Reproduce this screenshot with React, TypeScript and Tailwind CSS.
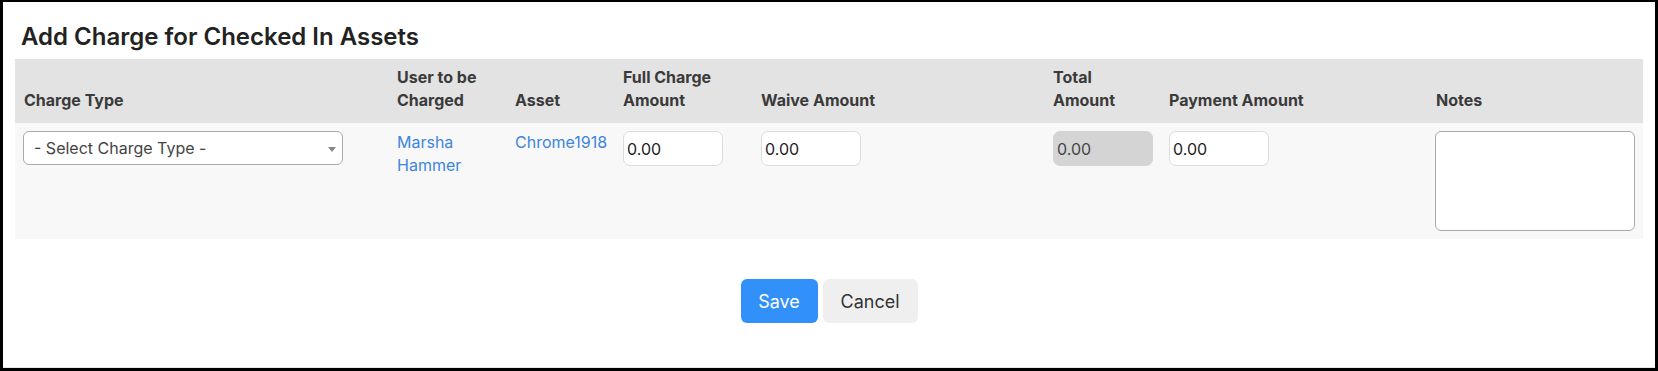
import React from 'react';

const columns = [
    { key: 'type', label: ['Charge Type'], width: 'w-[373px]' },
    { key: 'user', label: ['User to be', 'Charged'], width: 'w-[118px]' },
    { key: 'asset', label: ['Asset'], width: 'w-[108px]' },
    { key: 'full', label: ['Full Charge', 'Amount'], width: 'w-[138px]' },
    { key: 'waive', label: ['Waive Amount'], width: 'w-[292px]' },
    { key: 'total', label: ['Total', 'Amount'], width: 'w-[116px]' },
    { key: 'payment', label: ['Payment Amount'], width: 'w-[267px]' },
    { key: 'notes', label: ['Notes'], width: 'w-[216px]' },
];

function AmountInput({ value, disabled }: { value: string; disabled?: boolean }) {
    return (
        <input
            type="text"
            defaultValue={value}
            disabled={disabled}
            className={`block w-[100px] h-[35px] rounded-[7px] border pl-[3px] text-[16px] outline-none ${disabled
                ? 'bg-[#d4d4d4] border-[#d4d4d4] text-[#444]'
                : 'bg-white border-[#dcdcdc] text-[#222]'
                }`}
        />
    );
}

export default function App() {
    return (
        <div
            className="w-[1658px] h-[371px] bg-white border-black border-t-2 border-x-[3px] border-b-[3px]"
            style={{ fontFamily: 'Inter, "Noto Sans", sans-serif' }}
        >
            <div className="h-full flex flex-col px-3 border-b border-[#e6e6e6]">
                {/* Title */}
                <h2 className="mt-[20px] ml-[6px] text-[24px] leading-[29px] font-semibold text-[#222]">
                    Add Charge for Checked In Assets
                </h2>

                {/* Charges table */}
                <table className="mt-[8px] w-[1628px] table-fixed border-collapse">
                    <colgroup>
                        {columns.map((c) => (
                            <col key={c.key} className={c.width} />
                        ))}
                    </colgroup>
                    <thead>
                        <tr className="bg-[#e3e3e3]">
                            {columns.map((c) => (
                                <th
                                    key={c.key}
                                    className="px-[9px] pt-[7px] pb-[11px] align-bottom text-left text-[16px] leading-[23px] font-bold text-[#3a3a3a]"
                                >
                                    {c.label.map((line, i) => (
                                        <div key={i}>{line}</div>
                                    ))}
                                </th>
                            ))}
                        </tr>
                    </thead>
                    <tbody>
                        <tr className="bg-[#f8f8f8] align-top text-[16px] leading-[23px]">
                            <td className="px-[8px] py-2">
                                <div className="relative w-[320px] h-[34px] bg-white border border-[#aaa] rounded-[6px] flex items-center pl-[10px] text-[16px] text-[#444]">
                                    - Select Charge Type -
                                    <span className="absolute right-[6px] top-[15px] w-0 h-0 border-x-[4px] border-x-transparent border-t-[5px] border-t-[#888]" />
                                </div>
                            </td>
                            <td className="px-[9px] py-2 text-[#3d85de]">
                                <div>Marsha</div>
                                <div>Hammer</div>
                            </td>
                            <td className="px-[9px] py-2 text-[#3d85de]">Chrome1918</td>
                            <td className="px-[9px] py-2">
                                <AmountInput value="0.00" />
                            </td>
                            <td className="px-[9px] py-2">
                                <AmountInput value="0.00" />
                            </td>
                            <td className="px-[9px] py-2">
                                <AmountInput value="0.00" disabled />
                            </td>
                            <td className="px-[9px] py-2">
                                <AmountInput value="0.00" />
                            </td>
                            <td className="pl-[8px] pr-[8px] py-2">
                                <textarea className="block w-[200px] h-[100px] bg-white border border-[#aaa] rounded-[6px] resize-none outline-none" />
                            </td>
                        </tr>
                    </tbody>
                </table>

                {/* Actions */}
                <div className="mt-[40px] flex justify-center gap-[5px]">
                    <button className="h-[44px] w-[77px] rounded-[6px] bg-[#3290fb] text-white text-[18px]">
                        Save
                    </button>
                    <button className="h-[44px] w-[95px] rounded-[6px] bg-[#efefef] text-[#333] text-[18px]">
                        Cancel
                    </button>
                </div>
            </div>
        </div>
    );
}
